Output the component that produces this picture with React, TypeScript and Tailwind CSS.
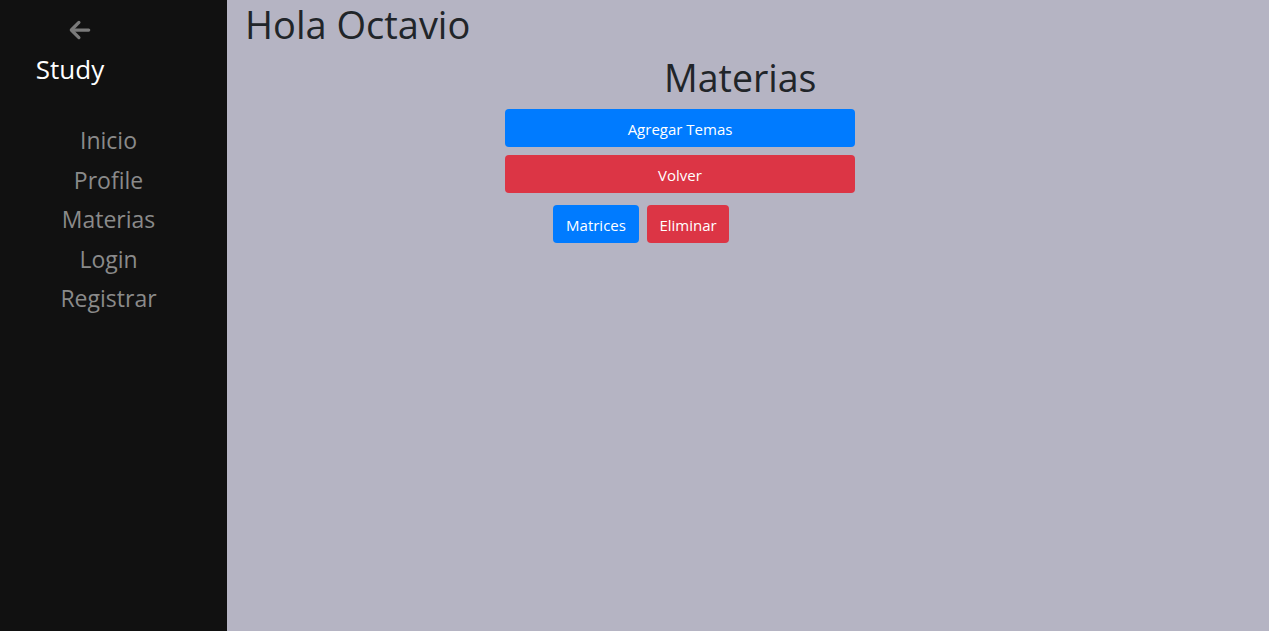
import * as React from "react";

const links = ["Inicio", "Profile", "Materias", "Login", "Registrar"];

export default function App() {
  return (
    <div className="flex min-h-[631px] w-full font-['Open_Sans',sans-serif]">
      {/* Sidebar */}
      <aside className="flex w-[227px] shrink-0 flex-col bg-[#111111]">
        <div className="flex w-[160px] flex-col items-center pt-[17px]">
          <svg width="26" height="26" viewBox="0 0 24 24" fill="none" stroke="#7a7a7a" strokeWidth="3" strokeLinecap="round" strokeLinejoin="round">
            <path d="M20 12H5" />
            <path d="M11 5l-7 7 7 7" />
          </svg>
        </div>
        <div className="mt-[8px] w-[140px] text-center text-[26px] leading-[36px] text-white">Study</div>
        <nav className="mt-[34px] flex w-[217px] flex-col items-center">
          {links.map((l) => (
            <a key={l} href="#" className="text-[23px] leading-[39.5px] text-[#8a8a8a]">
              {l}
            </a>
          ))}
        </nav>
      </aside>

      {/* Main */}
      <main className="flex-1 bg-[#b5b4c3] text-[#212529]">
        <h1 className="pl-[18px] pt-[1px] text-[38px] leading-[46px] whitespace-nowrap">Hola Octavio</h1>
        <div className="ml-[278px] flex w-[350px] flex-col">
          <h2 className="ml-[159px] pt-[8px] text-[37.5px] leading-[46px] whitespace-nowrap">Materias</h2>
          <button className="mt-[8px] h-[38px] w-full rounded-[4px] bg-[#007bff] pt-[2px] text-[15px] text-white">
            Agregar Temas
          </button>
          <button className="mt-[8px] h-[38px] w-full rounded-[4px] bg-[#dc3545] pt-[2px] text-[15px] text-white">
            Volver
          </button>
          <div className="mt-[12px] flex gap-[8px] pl-[48px]">
            <button className="h-[38px] w-[86px] rounded-[4px] bg-[#007bff] pt-[2px] text-[15px] text-white">Matrices</button>
            <button className="h-[38px] w-[82px] rounded-[4px] bg-[#dc3545] pt-[2px] text-[15px] text-white">Eliminar</button>
          </div>
        </div>
      </main>
    </div>
  );
}
